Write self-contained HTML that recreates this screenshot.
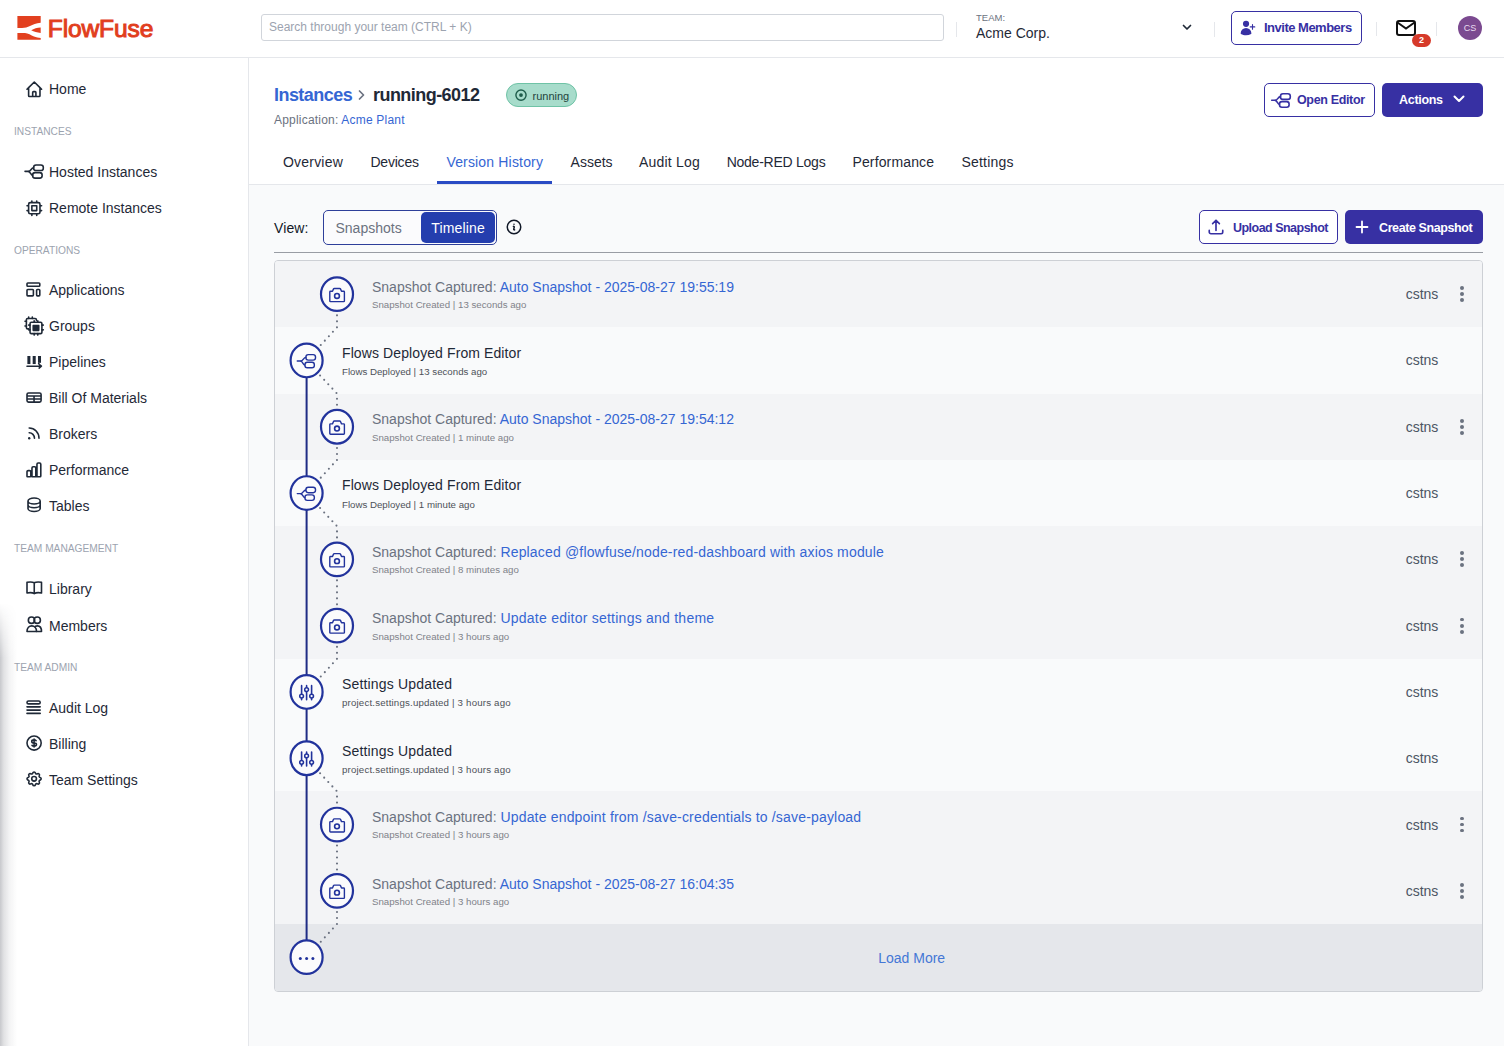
<!DOCTYPE html>
<html><head><meta charset="utf-8">
<style>
*{box-sizing:border-box;margin:0;padding:0}
html,body{width:1504px;height:1046px;overflow:hidden;background:#f9fafb;font-family:"Liberation Sans",sans-serif;color:#1f2937}
.a{position:absolute}
.t{position:absolute;white-space:nowrap;line-height:20px;height:20px}
svg{position:absolute;overflow:visible}
#hdr{left:0;top:0;width:1504px;height:58px;background:#fff;border-bottom:1px solid #e5e7eb}
#side{left:0;top:58px;width:249px;height:988px;background:#fff;border-right:1px solid #e5e7eb}
.nav{font-size:14px;color:#1f2937;left:49px}
.sec{font-size:10.2px;color:#9ca3af;left:14px;letter-spacing:0}
.si *{vector-effect:non-scaling-stroke}
.si [stroke]{stroke-width:1.6px}
.ic{stroke:#1f2937;fill:none;stroke-width:2;stroke-linecap:round;stroke-linejoin:round}
</style></head><body>
<!-- HEADER -->
<div id="hdr" class="a"></div>
<!-- logo -->
<svg style="left:0;top:0" width="60" height="50" viewBox="0 0 60 50">
 <path d="M17.4 16H40.7V22.8C36 23.2 33 24.5 30 26C27.5 27.3 25 27.9 22 27.9H17.4Z" fill="#e2401f"/>
 <path d="M31.2 30.3C34 28.6 37 27.7 40.7 27.5V32.9C37 32.7 34 32 31.2 30.3Z" fill="#e2401f"/>
 <path d="M17.4 32.9H25C28 33 31 35 34 36.5C36 37.4 38.5 37.9 40.7 38V39.8H17.4Z" fill="#e2401f"/>
</svg>
<div class="t" style="left:47.8px;top:13.6px;font-size:24.6px;line-height:30px;height:30px;color:#e13e1d;-webkit-text-stroke:1px #e13e1d;letter-spacing:-0.15px">FlowFuse</div>
<!-- search -->
<div class="a" style="left:261px;top:14px;width:683px;height:27px;border:1px solid #d1d5db;border-radius:3px;background:#fff"></div>
<div class="t" style="left:269px;top:17px;font-size:12px;color:#9ca3af">Search through your team (CTRL + K)</div>
<div class="a" style="left:956px;top:22px;width:1px;height:15px;background:#e5e7eb"></div>
<div class="t" style="left:976px;top:8px;font-size:9.5px;color:#6b7280">TEAM:</div>
<div class="t" style="left:976px;top:23px;font-size:14px;color:#1f2937">Acme Corp.</div>
<svg style="left:1181px;top:21px" width="12" height="12" viewBox="0 0 24 24"><path d="M5 9l7 7 7-7" fill="none" stroke="#1f2937" stroke-width="3.4" stroke-linecap="round" stroke-linejoin="round"/></svg>
<div class="a" style="left:1214px;top:22px;width:1px;height:15px;background:#e5e7eb"></div>
<!-- invite -->
<div class="a" style="left:1231px;top:11px;width:131px;height:34px;border:1px solid #3730a3;border-radius:5px;background:#fff"></div>
<svg style="left:1239px;top:19px" width="18" height="18" viewBox="0 0 24 24"><path fill="#3730a3" d="M5.25 6.375a4.125 4.125 0 1 1 8.25 0 4.125 4.125 0 0 1-8.25 0ZM2.25 19.125a7.125 7.125 0 0 1 14.25 0v.003l-.001.119a.75.75 0 0 1-.363.63 13.067 13.067 0 0 1-6.761 1.873c-2.472 0-4.786-.684-6.76-1.873a.75.75 0 0 1-.364-.63l-.001-.122ZM18.75 7.5a.75.75 0 0 0-1.5 0v2.25H15a.75.75 0 0 0 0 1.5h2.25v2.25a.75.75 0 0 0 1.5 0v-2.25H21a.75.75 0 0 0 0-1.5h-2.25V7.5Z"/></svg>
<div class="t" style="left:1264px;top:18.3px;font-size:13px;font-weight:bold;color:#3730a3;letter-spacing:-0.5px">Invite Members</div>
<div class="a" style="left:1376px;top:22px;width:1px;height:14px;background:#e5e7eb"></div>
<svg style="left:1396px;top:20px" width="20" height="16" viewBox="0 0 20 16"><rect x="1" y="1" width="18" height="14" rx="2" fill="none" stroke="#111" stroke-width="2"/><path d="M1.5 2.5L10 8.5L18.5 2.5" fill="none" stroke="#111" stroke-width="2"/></svg>
<div class="a" style="left:1412px;top:34px;width:19px;height:13px;border-radius:7px;background:#d63a2a"></div>
<div class="t" style="left:1412px;top:34px;width:19px;height:13px;line-height:13px;text-align:center;font-size:9px;color:#fff;font-weight:bold">2</div>
<div class="a" style="left:1436px;top:22px;width:1px;height:14px;background:#e5e7eb"></div>
<div class="a" style="left:1458px;top:16px;width:24px;height:24px;border-radius:12px;background:#7b4a90"></div>
<div class="t" style="left:1458px;top:18px;width:24px;line-height:20px;text-align:center;font-size:9px;color:#e9ddf0">CS</div>

<!-- SIDEBAR -->
<div id="side" class="a"></div>
<div class="a" style="left:0;top:603px;width:17px;height:443px;background:linear-gradient(to right,rgba(20,25,40,0.24),rgba(20,25,40,0.13) 22%,rgba(20,25,40,0.05) 55%,rgba(20,25,40,0) 100%);-webkit-mask-image:linear-gradient(to bottom,transparent,#000 55px)"></div>
<div class="t nav" style="top:78.8px">Home</div>
<svg class="si" style="left:26.80px;top:81.60px" width="14.60" height="14.50" viewBox="3 3 18 18" preserveAspectRatio="none"><path stroke="#1f2937" fill="none" stroke-width="2" stroke-linecap="round" stroke-linejoin="round" d="M3 12l2-2m0 0l7-7 7 7M5 10v10a1 1 0 001 1h3m10-11l2 2m-2-2v10a1 1 0 01-1 1h-3m-6 0a1 1 0 001-1v-4a1 1 0 011-1h2a1 1 0 011 1v4a1 1 0 001 1m-6 0h6"/></svg>
<div class="t sec" style="top:122.2px">INSTANCES</div>
<div class="t nav" style="top:162.2px">Hosted Instances</div>
<svg class="si" style="left:24.80px;top:164.70px" width="18.30" height="13.10" viewBox="0.699999988079071 0.800000011920929 18.599998474121094 13.40000057220459" preserveAspectRatio="none"><g stroke="#1f2937" fill="none" stroke-width="2" stroke-linecap="round" stroke-linejoin="round"><path d="M0.7 7.3H4.5C6.5 7.3 7 3.6 9.5 3.6"/><path d="M4.3 7.4C6.3 7.8 6.5 11.4 8.5 11.4"/><rect x="9.5" y="0.8" width="9.8" height="5.6" rx="2.4"/><rect x="8.5" y="8.6" width="9.6" height="5.6" rx="2.4"/></g></svg>
<div class="t nav" style="top:198.2px">Remote Instances</div>
<svg class="si" style="left:26.80px;top:200.80px" width="14.60" height="14.40" viewBox="3 3 18 18" preserveAspectRatio="none"><path stroke="#1f2937" fill="none" stroke-width="2" stroke-linecap="round" stroke-linejoin="round" d="M9 3v2m6-2v2M9 19v2m6-2v2M5 9H3m2 6H3m18-6h-2m2 6h-2M7 19h10a2 2 0 002-2V7a2 2 0 00-2-2H7a2 2 0 00-2 2v10a2 2 0 002 2zM9 9h6v6H9V9z"/></svg>
<div class="t sec" style="top:241.4px">OPERATIONS</div>
<div class="t nav" style="top:280.0px">Applications</div>
<svg class="si" style="left:27.40px;top:283.00px" width="12.80" height="12.90" viewBox="4 4 16 16" preserveAspectRatio="none"><path stroke="#1f2937" fill="none" stroke-width="2" stroke-linecap="round" stroke-linejoin="round" d="M4 5a1 1 0 011-1h14a1 1 0 011 1v2a1 1 0 01-1 1H5a1 1 0 01-1-1V5zM4 13a1 1 0 011-1h6a1 1 0 011 1v6a1 1 0 01-1 1H5a1 1 0 01-1-1v-6zM16 13a1 1 0 011-1h2a1 1 0 011 1v6a1 1 0 01-1 1h-2a1 1 0 01-1-1v-6z"/></svg>
<div class="t nav" style="top:316.0px">Groups</div>
<svg class="si" style="left:24.80px;top:316.70px" width="18.30" height="18.10" viewBox="2 2.5 20 19" preserveAspectRatio="none"><g stroke="#1f2937" fill="none" stroke-width="2" stroke-linecap="round" stroke-linejoin="round" stroke-width="1.8"><path d="M6 2.5v1.5M10 2.5v1.5M2 7h1.5M2 12h1.5"/><path d="M14.5 6V5.5a1.5 1.5 0 00-1.5-1.5H5a1.5 1.5 0 00-1.5 1.5v8a1.5 1.5 0 001.5 1.5h1"/><path d="M12 6.5v1.5M16 6.5v1.5M12 20v1.5M16 20v1.5M22 11h-1.5M22 16h-1.5M6 11h1.5M6 16h1.5"/><rect x="7.5" y="8" width="13" height="12" rx="1.5"/><rect x="11" y="11.5" width="6" height="5" fill="#1f2937"/></g></svg>
<div class="t nav" style="top:352.0px">Pipelines</div>
<svg class="si" style="left:26.80px;top:355.60px" width="14.40" height="12.10" viewBox="2.5 3 19 19.5" preserveAspectRatio="none"><g><rect x="3" y="3" width="4" height="13" fill="#1f2937"/><rect x="10" y="3" width="4" height="13" fill="#1f2937"/><rect x="17" y="3" width="4" height="11" fill="#1f2937"/><path d="M18 14v2" stroke="#1f2937" stroke-width="4"/><path stroke="#1f2937" fill="none" stroke-width="2" stroke-linecap="round" stroke-linejoin="round" d="M2.5 19.5H21.5M18.5 16.5l3 3-3 3"/></g></svg>
<div class="t nav" style="top:388.0px">Bill Of Materials</div>
<svg class="si" style="left:26.80px;top:393.10px" width="14.10" height="9.10" viewBox="3 6 18 12" preserveAspectRatio="none"><path stroke="#1f2937" fill="none" stroke-width="2" stroke-linecap="round" stroke-linejoin="round" d="M3 10h18M3 14h18m-9-4v8m-7 0h14a2 2 0 002-2V8a2 2 0 00-2-2H5a2 2 0 00-2 2v8a2 2 0 002 2z"/></svg>
<div class="t nav" style="top:424.0px">Brokers</div>
<svg class="si" style="left:28.40px;top:427.80px" width="11.00" height="11.60" viewBox="4.400000095367432 5 14.600000381469727 14.600000381469727" preserveAspectRatio="none"><path stroke="#1f2937" fill="none" stroke-width="2" stroke-linecap="round" stroke-linejoin="round" d="M6 5c7.18 0 13 5.82 13 13M6 11a7 7 0 017 7"/><circle cx="6" cy="18" r="1.6" fill="#1f2937"/></svg>
<div class="t nav" style="top:460.0px">Performance</div>
<svg class="si" style="left:27.10px;top:462.50px" width="13.80" height="13.70" viewBox="3 3 18 18" preserveAspectRatio="none"><path stroke="#1f2937" fill="none" stroke-width="2" stroke-linecap="round" stroke-linejoin="round" d="M3 14.5a1.5 1.5 0 011.5-1.5h2a1.5 1.5 0 011.5 1.5V20a1 1 0 01-1 1H3.5a.5.5 0 01-.5-.5V14.5ZM9.5 9.5A1.5 1.5 0 0111 8h2a1.5 1.5 0 011.5 1.5V21h-5V9.5ZM16 4.5A1.5 1.5 0 0117.5 3h2A1.5 1.5 0 0121 4.5V20a1 1 0 01-1 1h-4V4.5Z"/></svg>
<div class="t nav" style="top:496.0px">Tables</div>
<svg class="si" style="left:27.80px;top:498.40px" width="12.20" height="13.50" viewBox="4 3 16 18" preserveAspectRatio="none"><path stroke="#1f2937" fill="none" stroke-width="2" stroke-linecap="round" stroke-linejoin="round" d="M4 7v10c0 2.21 3.582 4 8 4s8-1.79 8-4V7M4 7c0 2.21 3.582 4 8 4s8-1.79 8-4M4 7c0-2.21 3.582-4 8-4s8 1.79 8 4m0 5c0 2.21-3.582 4-8 4s-8-1.79-8-4"/></svg>
<div class="t sec" style="top:539.3px">TEAM MANAGEMENT</div>
<div class="t nav" style="top:579.4px">Library</div>
<svg class="si" style="left:26.70px;top:582.10px" width="14.50" height="11.70" viewBox="2.5 3.897365093231201 19 17.10263442993164" preserveAspectRatio="none"><path stroke="#1f2937" fill="none" stroke-width="2" stroke-linecap="round" stroke-linejoin="round" d="M12 5C10 3.8 6 3.6 2.5 4.3V20c3.5-.8 7.5-.5 9.5 1 2-1.5 6-1.8 9.5-1V4.3C18 3.6 14 3.8 12 5Zm0 0v16"/></svg>
<div class="t nav" style="top:615.5px">Members</div>
<svg class="si" style="left:26.70px;top:616.50px" width="14.50" height="14.50" viewBox="1.7000000476837158 1.3999998569488525 14.59999942779541 14.600000381469727" preserveAspectRatio="none"><g stroke="#1f2937" fill="none" stroke-width="2" stroke-linecap="round" stroke-linejoin="round"><circle cx="6.25" cy="4.6" r="3.2"/><circle cx="12" cy="4.6" r="3.2"/><path d="M1.7 16C1.7 12.5 4 10.3 6.5 10.3C9 10.3 11.3 12.5 11.3 16Z"/><path d="M10.2 10.8C10.8 10.5 11.5 10.3 12.2 10.3C14.5 10.3 16.3 12.5 16.3 16H11.3"/></g></svg>
<div class="t sec" style="top:657.8px">TEAM ADMIN</div>
<div class="t nav" style="top:698.0px">Audit Log</div>
<svg class="si" style="left:27.30px;top:700.80px" width="13.20" height="12.40" viewBox="3 3 18 17" preserveAspectRatio="none"><g stroke="#1f2937" fill="none" stroke-width="2" stroke-linecap="round" stroke-linejoin="round" stroke-width="1.9"><rect x="3" y="3" width="18" height="4" rx="2"/><path d="M3 11h18M3 15.5h18M3 20h18"/></g></svg>
<div class="t nav" style="top:734.0px">Billing</div>
<svg class="si" style="left:26.80px;top:735.90px" width="14.20" height="14.10" viewBox="3 3.0031075477600098 18.000001907348633 18.000001907348633" preserveAspectRatio="none"><path stroke="#1f2937" fill="none" stroke-width="2" stroke-linecap="round" stroke-linejoin="round" d="M12 8c-1.657 0-3 .895-3 2s1.343 2 3 2 3 .895 3 2-1.343 2-3 2m0-8c1.11 0 2.08.402 2.599 1M12 8V7m0 1v8m0 0v1m0-1c-1.11 0-2.08-.402-2.599-1M21 12a9 9 0 11-18 0 9 9 0 0118 0z"/></svg>
<div class="t nav" style="top:770.0px">Team Settings</div>
<svg class="si" style="left:26.80px;top:771.80px" width="14.20" height="13.70" viewBox="3.0000009536743164 3 18 18" preserveAspectRatio="none"><path stroke="#1f2937" fill="none" stroke-width="2" stroke-linecap="round" stroke-linejoin="round" d="M10.325 4.317c.426-1.756 2.924-1.756 3.35 0a1.724 1.724 0 002.573 1.066c1.543-.94 3.31.826 2.37 2.37a1.724 1.724 0 001.065 2.572c1.756.426 1.756 2.924 0 3.35a1.724 1.724 0 00-1.066 2.573c.94 1.543-.826 3.31-2.37 2.37a1.724 1.724 0 00-2.572 1.065c-.426 1.756-2.924 1.756-3.35 0a1.724 1.724 0 00-2.573-1.066c-1.543.94-3.31-.826-2.37-2.37a1.724 1.724 0 00-1.065-2.572c-1.756-.426-1.756-2.924 0-3.35a1.724 1.724 0 001.066-2.573c-.94-1.543.826-3.31 2.37-2.37.996.608 2.296.07 2.572-1.065z"/><path stroke="#1f2937" fill="none" stroke-width="2" stroke-linecap="round" stroke-linejoin="round" d="M15 12a3 3 0 11-6 0 3 3 0 016 0z"/></svg>

<!-- MAIN -->
<div class="a" style="left:249px;top:58px;width:1255px;height:127px;background:#fff;border-bottom:1px solid #e5e7eb"></div>
<div class="t" style="left:274px;top:83.20px;height:24px;line-height:24px;font-size:18px;color:#3566d3;font-weight:bold;letter-spacing:-0.55px">Instances</div>
<svg style="left:357px;top:89px" width="9" height="12" viewBox="0 0 9 12"><path d="M2.5 2L6.5 6L2.5 10" fill="none" stroke="#6b7280" stroke-width="1.7" stroke-linecap="round" stroke-linejoin="round"/></svg>
<div class="t" style="left:373px;top:83.20px;height:24px;line-height:24px;font-size:18px;color:#1f2937;font-weight:bold;letter-spacing:-0.55px">running-6012</div>
<div class="a" style="left:506px;top:83px;width:71px;height:24px;border-radius:12px;background:#a7dccb;border:1px solid #6fc3a6"></div>
<svg style="left:514px;top:88px" width="14" height="14" viewBox="0 0 14 14"><circle cx="7" cy="7.1" r="5.1" fill="none" stroke="#1d5c4a" stroke-width="1.4"/><circle cx="7" cy="7.1" r="1.9" fill="#1d5c4a"/></svg>
<div class="t" style="left:532.5px;top:85.80px;height:20px;line-height:20px;font-size:11px;color:#24443c;letter-spacing:0px">running</div>
<div class="t" style="left:274px;top:109.50px;height:20px;line-height:20px;font-size:12px;color:#6b7280;letter-spacing:0.2px">Application: <span style="color:#3566d3">Acme Plant</span></div>
<div class="a" style="left:1264px;top:83px;width:111px;height:34px;border:1px solid #3730a3;border-radius:5px;background:#fff"></div>
<svg style="left:1271px;top:93px" width="20" height="15" viewBox="0 0 20 15"><g stroke="#3730a3" fill="none" stroke-width="1.6" stroke-linecap="round" stroke-linejoin="round"><path d="M0.7 7.3H4.5C6.5 7.3 7 3.6 9.5 3.6"/><path d="M4.3 7.4C6.3 7.8 6.5 11.4 8.5 11.4"/><rect x="9.5" y="0.8" width="9.8" height="5.6" rx="2.4"/><rect x="8.5" y="8.6" width="9.6" height="5.6" rx="2.4"/></g></svg>
<div class="t" style="left:1297px;top:89.50px;height:20px;line-height:20px;font-size:12.5px;color:#3730a3;font-weight:bold;letter-spacing:-0.35px">Open Editor</div>
<div class="a" style="left:1382px;top:83px;width:101px;height:34px;border-radius:5px;background:#3730a3"></div>
<div class="t" style="left:1399px;top:89.50px;height:20px;line-height:20px;font-size:12.5px;color:#fff;font-weight:bold;letter-spacing:-0.3px">Actions</div>
<svg style="left:1453px;top:94px" width="12" height="10" viewBox="0 0 12 10"><path d="M1.5 2.5L6 7L10.5 2.5" fill="none" stroke="#fff" stroke-width="2" stroke-linecap="round" stroke-linejoin="round"/></svg>
<div class="t" style="left:283px;top:152.00px;height:20px;line-height:20px;font-size:14px;color:#1f2937;width:66px;letter-spacing:0.2px">Overview</div>
<div class="t" style="left:370.4px;top:152.00px;height:20px;line-height:20px;font-size:14px;color:#1f2937;width:54.4px;letter-spacing:-0.2px">Devices</div>
<div class="t" style="left:446.4px;top:152.00px;height:20px;line-height:20px;font-size:14px;color:#3566d3;width:102.6px;letter-spacing:0.17px">Version History</div>
<div class="t" style="left:570.6px;top:152.00px;height:20px;line-height:20px;font-size:14px;color:#1f2937;width:47.4px;letter-spacing:0px">Assets</div>
<div class="t" style="left:639px;top:152.00px;height:20px;line-height:20px;font-size:14px;color:#1f2937;width:67px;letter-spacing:0.2px">Audit Log</div>
<div class="t" style="left:726.7px;top:152.00px;height:20px;line-height:20px;font-size:14px;color:#1f2937;width:105px;letter-spacing:-0.25px">Node-RED Logs</div>
<div class="t" style="left:852.4px;top:152.00px;height:20px;line-height:20px;font-size:14px;color:#1f2937;width:87.8px;letter-spacing:0.15px">Performance</div>
<div class="t" style="left:961.5px;top:152.00px;height:20px;line-height:20px;font-size:14px;color:#1f2937;width:58.9px;letter-spacing:0.2px">Settings</div>
<div class="a" style="left:437px;top:181px;width:115px;height:3px;background:#2a4bc4"></div>
<div class="t" style="left:274px;top:218.00px;height:20px;line-height:20px;font-size:14px;color:#111827;letter-spacing:0.1px">View:</div>
<div class="a" style="left:323px;top:210px;width:174px;height:35px;border:1px solid #2e3f9a;border-radius:5px;background:#fbfbfd"></div>
<div class="a" style="left:421px;top:212px;width:74px;height:31px;border-radius:5px;background:#243eae"></div>
<div class="t" style="left:335.5px;top:218.00px;height:20px;line-height:20px;font-size:14px;color:#6b7280;">Snapshots</div>
<div class="t" style="left:431.3px;top:218.00px;height:20px;line-height:20px;font-size:14px;color:#fff;letter-spacing:0.15px">Timeline</div>
<svg style="left:505px;top:218px" width="18" height="18" viewBox="0 0 24 24"><path d="m11.25 11.25.041-.02a.75.75 0 0 1 1.063.852l-.708 2.836a.75.75 0 0 0 1.063.853l.041-.021M21 12a9 9 0 1 1-18 0 9 9 0 0 1 18 0Zm-9-3.75h.008v.008H12V8.25Z" fill="none" stroke="#111827" stroke-width="2" stroke-linecap="round" stroke-linejoin="round"/></svg>
<div class="a" style="left:1199px;top:210px;width:139px;height:34px;border:1px solid #3730a3;border-radius:5px;background:#fff"></div>
<svg style="left:1207px;top:218px" width="18" height="18" viewBox="0 0 24 24"><path d="M3 16.5v2.25A2.25 2.25 0 0 0 5.25 21h13.5A2.25 2.25 0 0 0 21 18.75V16.5m-13.5-9L12 3m0 0 4.5 4.5M12 3v13.5" fill="none" stroke="#3730a3" stroke-width="2.2" stroke-linecap="round" stroke-linejoin="round"/></svg>
<div class="t" style="left:1233px;top:218.20px;height:20px;line-height:20px;font-size:12.5px;color:#3730a3;font-weight:bold;letter-spacing:-0.52px">Upload Snapshot</div>
<div class="a" style="left:1345px;top:210px;width:138px;height:34px;border-radius:5px;background:#3730a3"></div>
<svg style="left:1355px;top:220px" width="14" height="14" viewBox="0 0 14 14"><path d="M7 1.5V12.5M1.5 7H12.5" fill="none" stroke="#fff" stroke-width="1.8" stroke-linecap="round"/></svg>
<div class="t" style="left:1379px;top:218.20px;height:20px;line-height:20px;font-size:12.5px;color:#fff;font-weight:bold;letter-spacing:-0.4px">Create Snapshot</div>
<div class="a" style="left:274px;top:252px;width:1209px;height:1px;background:#999da4"></div>
<div class="a" style="left:274px;top:260px;width:1209px;height:732px;border:1px solid #cdd0d5;border-radius:4px;background:#f9fafb;overflow:hidden" id="list">
<div class="a" style="left:0;top:0.00px;width:1207px;height:66.80px;background:#f3f4f6"></div>
<div class="a" style="left:0;top:66.30px;width:1207px;height:66.80px;background:#f9fafb"></div>
<div class="a" style="left:0;top:132.60px;width:1207px;height:66.80px;background:#f3f4f6"></div>
<div class="a" style="left:0;top:198.90px;width:1207px;height:66.80px;background:#f9fafb"></div>
<div class="a" style="left:0;top:265.20px;width:1207px;height:66.80px;background:#f3f4f6"></div>
<div class="a" style="left:0;top:331.50px;width:1207px;height:66.80px;background:#f3f4f6"></div>
<div class="a" style="left:0;top:397.80px;width:1207px;height:66.80px;background:#f9fafb"></div>
<div class="a" style="left:0;top:464.10px;width:1207px;height:66.80px;background:#f9fafb"></div>
<div class="a" style="left:0;top:530.40px;width:1207px;height:66.80px;background:#f3f4f6"></div>
<div class="a" style="left:0;top:596.70px;width:1207px;height:66.80px;background:#f3f4f6"></div>
<div class="a" style="left:0;top:663.00px;width:1207px;height:80px;background:#e5e7eb"></div>
</div>
<div class="t" style="left:372px;top:276.80px;height:20px;line-height:20px;font-size:14px;color:#6b7280;">Snapshot Captured: <span style="color:#3566d3;letter-spacing:0px">Auto Snapshot - 2025-08-27 19:55:19</span></div>
<div class="t" style="left:372px;top:298.05px;height:14px;line-height:14px;font-size:9.7px;color:#7f8289;">Snapshot Created | 13 seconds ago</div>
<div class="a" style="left:1460.1px;top:286.15px;width:3.8px;height:3.8px;border-radius:2px;background:#6b7280"></div>
<div class="a" style="left:1460.1px;top:292.25px;width:3.8px;height:3.8px;border-radius:2px;background:#6b7280"></div>
<div class="a" style="left:1460.1px;top:298.25px;width:3.8px;height:3.8px;border-radius:2px;background:#6b7280"></div>
<div class="t" style="left:1405.7px;top:284.15px;height:20px;line-height:20px;font-size:14px;color:#4b5563;">cstns</div>
<div class="t" style="left:342px;top:342.75px;height:20px;line-height:20px;font-size:14px;color:#1f2937;letter-spacing:0.1px">Flows Deployed From Editor</div>
<div class="t" style="left:342px;top:364.95px;height:14px;line-height:14px;font-size:9.7px;color:#4d5158;letter-spacing:0">Flows Deployed | 13 seconds ago</div>
<div class="t" style="left:1405.7px;top:350.45px;height:20px;line-height:20px;font-size:14px;color:#4b5563;">cstns</div>
<div class="t" style="left:372px;top:409.40px;height:20px;line-height:20px;font-size:14px;color:#6b7280;">Snapshot Captured: <span style="color:#3566d3;letter-spacing:0px">Auto Snapshot - 2025-08-27 19:54:12</span></div>
<div class="t" style="left:372px;top:430.65px;height:14px;line-height:14px;font-size:9.7px;color:#7f8289;">Snapshot Created | 1 minute ago</div>
<div class="a" style="left:1460.1px;top:418.75px;width:3.8px;height:3.8px;border-radius:2px;background:#6b7280"></div>
<div class="a" style="left:1460.1px;top:424.85px;width:3.8px;height:3.8px;border-radius:2px;background:#6b7280"></div>
<div class="a" style="left:1460.1px;top:430.85px;width:3.8px;height:3.8px;border-radius:2px;background:#6b7280"></div>
<div class="t" style="left:1405.7px;top:416.75px;height:20px;line-height:20px;font-size:14px;color:#4b5563;">cstns</div>
<div class="t" style="left:342px;top:475.35px;height:20px;line-height:20px;font-size:14px;color:#1f2937;letter-spacing:0.1px">Flows Deployed From Editor</div>
<div class="t" style="left:342px;top:497.55px;height:14px;line-height:14px;font-size:9.7px;color:#4d5158;letter-spacing:0">Flows Deployed | 1 minute ago</div>
<div class="t" style="left:1405.7px;top:483.05px;height:20px;line-height:20px;font-size:14px;color:#4b5563;">cstns</div>
<div class="t" style="left:372px;top:542.00px;height:20px;line-height:20px;font-size:14px;color:#6b7280;">Snapshot Captured: <span style="color:#3566d3;letter-spacing:0.165px">Replaced @flowfuse/node-red-dashboard with axios module</span></div>
<div class="t" style="left:372px;top:563.25px;height:14px;line-height:14px;font-size:9.7px;color:#7f8289;">Snapshot Created | 8 minutes ago</div>
<div class="a" style="left:1460.1px;top:551.35px;width:3.8px;height:3.8px;border-radius:2px;background:#6b7280"></div>
<div class="a" style="left:1460.1px;top:557.45px;width:3.8px;height:3.8px;border-radius:2px;background:#6b7280"></div>
<div class="a" style="left:1460.1px;top:563.45px;width:3.8px;height:3.8px;border-radius:2px;background:#6b7280"></div>
<div class="t" style="left:1405.7px;top:549.35px;height:20px;line-height:20px;font-size:14px;color:#4b5563;">cstns</div>
<div class="t" style="left:372px;top:608.30px;height:20px;line-height:20px;font-size:14px;color:#6b7280;">Snapshot Captured: <span style="color:#3566d3;letter-spacing:0.24px">Update editor settings and theme</span></div>
<div class="t" style="left:372px;top:629.55px;height:14px;line-height:14px;font-size:9.7px;color:#7f8289;">Snapshot Created | 3 hours ago</div>
<div class="a" style="left:1460.1px;top:617.65px;width:3.8px;height:3.8px;border-radius:2px;background:#6b7280"></div>
<div class="a" style="left:1460.1px;top:623.75px;width:3.8px;height:3.8px;border-radius:2px;background:#6b7280"></div>
<div class="a" style="left:1460.1px;top:629.75px;width:3.8px;height:3.8px;border-radius:2px;background:#6b7280"></div>
<div class="t" style="left:1405.7px;top:615.65px;height:20px;line-height:20px;font-size:14px;color:#4b5563;">cstns</div>
<div class="t" style="left:342px;top:674.25px;height:20px;line-height:20px;font-size:14px;color:#1f2937;letter-spacing:0.17px">Settings Updated</div>
<div class="t" style="left:342px;top:696.45px;height:14px;line-height:14px;font-size:9.7px;color:#4d5158;letter-spacing:0.18px">project.settings.updated | 3 hours ago</div>
<div class="t" style="left:1405.7px;top:681.95px;height:20px;line-height:20px;font-size:14px;color:#4b5563;">cstns</div>
<div class="t" style="left:342px;top:740.55px;height:20px;line-height:20px;font-size:14px;color:#1f2937;letter-spacing:0.17px">Settings Updated</div>
<div class="t" style="left:342px;top:762.75px;height:14px;line-height:14px;font-size:9.7px;color:#4d5158;letter-spacing:0.18px">project.settings.updated | 3 hours ago</div>
<div class="t" style="left:1405.7px;top:748.25px;height:20px;line-height:20px;font-size:14px;color:#4b5563;">cstns</div>
<div class="t" style="left:372px;top:807.20px;height:20px;line-height:20px;font-size:14px;color:#6b7280;">Snapshot Captured: <span style="color:#3566d3;letter-spacing:0.18px">Update endpoint from /save-credentials to /save-payload</span></div>
<div class="t" style="left:372px;top:828.45px;height:14px;line-height:14px;font-size:9.7px;color:#7f8289;">Snapshot Created | 3 hours ago</div>
<div class="a" style="left:1460.1px;top:816.55px;width:3.8px;height:3.8px;border-radius:2px;background:#6b7280"></div>
<div class="a" style="left:1460.1px;top:822.65px;width:3.8px;height:3.8px;border-radius:2px;background:#6b7280"></div>
<div class="a" style="left:1460.1px;top:828.65px;width:3.8px;height:3.8px;border-radius:2px;background:#6b7280"></div>
<div class="t" style="left:1405.7px;top:814.55px;height:20px;line-height:20px;font-size:14px;color:#4b5563;">cstns</div>
<div class="t" style="left:372px;top:873.50px;height:20px;line-height:20px;font-size:14px;color:#6b7280;">Snapshot Captured: <span style="color:#3566d3;letter-spacing:0px">Auto Snapshot - 2025-08-27 16:04:35</span></div>
<div class="t" style="left:372px;top:894.75px;height:14px;line-height:14px;font-size:9.7px;color:#7f8289;">Snapshot Created | 3 hours ago</div>
<div class="a" style="left:1460.1px;top:882.85px;width:3.8px;height:3.8px;border-radius:2px;background:#6b7280"></div>
<div class="a" style="left:1460.1px;top:888.95px;width:3.8px;height:3.8px;border-radius:2px;background:#6b7280"></div>
<div class="a" style="left:1460.1px;top:894.95px;width:3.8px;height:3.8px;border-radius:2px;background:#6b7280"></div>
<div class="t" style="left:1405.7px;top:880.85px;height:20px;line-height:20px;font-size:14px;color:#4b5563;">cstns</div>
<div class="t" style="left:878.2px;top:948.35px;height:20px;line-height:20px;font-size:14px;color:#4477d6;">Load More</div>
<svg style="left:0;top:0" width="1504" height="1046" viewBox="0 0 1504 1046">
<path d="M306.6 360.45V957.15" stroke="#1f2c85" stroke-width="2"/>
<path d="M337 315.35V327.30L318.6 347.45" fill="none" stroke="#6b7280" stroke-width="2.1" stroke-dasharray="0 6" stroke-linecap="round"/>
<path d="M320.1 375.45L337 393.60V409.75" fill="none" stroke="#6b7280" stroke-width="2.1" stroke-dasharray="0 6" stroke-linecap="round"/>
<path d="M337 447.95V459.90L318.6 480.05" fill="none" stroke="#6b7280" stroke-width="2.1" stroke-dasharray="0 6" stroke-linecap="round"/>
<path d="M320.1 508.05L337 526.20V542.35" fill="none" stroke="#6b7280" stroke-width="2.1" stroke-dasharray="0 6" stroke-linecap="round"/>
<path d="M337 580.35V608.65" fill="none" stroke="#6b7280" stroke-width="2.1" stroke-dasharray="0 6" stroke-linecap="round"/>
<path d="M337 646.85V658.80L318.6 678.95" fill="none" stroke="#6b7280" stroke-width="2.1" stroke-dasharray="0 6" stroke-linecap="round"/>
<path d="M320.1 773.25L337 791.40V807.55" fill="none" stroke="#6b7280" stroke-width="2.1" stroke-dasharray="0 6" stroke-linecap="round"/>
<path d="M337 845.55V873.85" fill="none" stroke="#6b7280" stroke-width="2.1" stroke-dasharray="0 6" stroke-linecap="round"/>
<path d="M337 912.05V924.00L318.6 944.15" fill="none" stroke="#6b7280" stroke-width="2.1" stroke-dasharray="0 6" stroke-linecap="round"/>
<ellipse cx="337" cy="294.15" rx="16" ry="16.8" fill="#fbfbfc" stroke="#22339c" stroke-width="2.2"/>
<g transform="translate(337 294.15)" fill="none" stroke="#22339c" stroke-width="1.4" stroke-linecap="round" stroke-linejoin="round"><path d="M-7.2 -2.2Q-7.2 -2.9 -6.5 -2.9H-4.5L-3.6 -5Q-3.3 -5.7 -2.6 -5.7H2.6Q3.3 -5.7 3.6 -5L4.5 -2.9H6.7Q7.4 -2.9 7.4 -2.2V6.8Q7.4 7.5 6.7 7.5H-6.5Q-7.2 7.5 -7.2 6.8Z"/><circle cx="0" cy="1.8" r="2.4" stroke-width="1.6"/></g>
<ellipse cx="306.6" cy="360.45" rx="16" ry="16.8" fill="#fbfbfc" stroke="#22339c" stroke-width="2.2"/>
<g transform="translate(306.6 360.45)" fill="none" stroke="#22339c" stroke-width="1.4" stroke-linecap="round" stroke-linejoin="round"><g transform="translate(-10 -6.6) scale(0.98)" stroke-width="1.45"><path d="M0.7 7.3H4.5C6.5 7.3 7 3.6 9.5 3.6"/><path d="M4.3 7.4C6.3 7.8 6.5 11.4 8.5 11.4"/><rect x="9.5" y="0.8" width="9.8" height="5.6" rx="2.4"/><rect x="8.5" y="8.6" width="9.6" height="5.6" rx="2.4"/></g></g>
<ellipse cx="337" cy="426.75" rx="16" ry="16.8" fill="#fbfbfc" stroke="#22339c" stroke-width="2.2"/>
<g transform="translate(337 426.75)" fill="none" stroke="#22339c" stroke-width="1.4" stroke-linecap="round" stroke-linejoin="round"><path d="M-7.2 -2.2Q-7.2 -2.9 -6.5 -2.9H-4.5L-3.6 -5Q-3.3 -5.7 -2.6 -5.7H2.6Q3.3 -5.7 3.6 -5L4.5 -2.9H6.7Q7.4 -2.9 7.4 -2.2V6.8Q7.4 7.5 6.7 7.5H-6.5Q-7.2 7.5 -7.2 6.8Z"/><circle cx="0" cy="1.8" r="2.4" stroke-width="1.6"/></g>
<ellipse cx="306.6" cy="493.05" rx="16" ry="16.8" fill="#fbfbfc" stroke="#22339c" stroke-width="2.2"/>
<g transform="translate(306.6 493.05)" fill="none" stroke="#22339c" stroke-width="1.4" stroke-linecap="round" stroke-linejoin="round"><g transform="translate(-10 -6.6) scale(0.98)" stroke-width="1.45"><path d="M0.7 7.3H4.5C6.5 7.3 7 3.6 9.5 3.6"/><path d="M4.3 7.4C6.3 7.8 6.5 11.4 8.5 11.4"/><rect x="9.5" y="0.8" width="9.8" height="5.6" rx="2.4"/><rect x="8.5" y="8.6" width="9.6" height="5.6" rx="2.4"/></g></g>
<ellipse cx="337" cy="559.35" rx="16" ry="16.8" fill="#fbfbfc" stroke="#22339c" stroke-width="2.2"/>
<g transform="translate(337 559.35)" fill="none" stroke="#22339c" stroke-width="1.4" stroke-linecap="round" stroke-linejoin="round"><path d="M-7.2 -2.2Q-7.2 -2.9 -6.5 -2.9H-4.5L-3.6 -5Q-3.3 -5.7 -2.6 -5.7H2.6Q3.3 -5.7 3.6 -5L4.5 -2.9H6.7Q7.4 -2.9 7.4 -2.2V6.8Q7.4 7.5 6.7 7.5H-6.5Q-7.2 7.5 -7.2 6.8Z"/><circle cx="0" cy="1.8" r="2.4" stroke-width="1.6"/></g>
<ellipse cx="337" cy="625.65" rx="16" ry="16.8" fill="#fbfbfc" stroke="#22339c" stroke-width="2.2"/>
<g transform="translate(337 625.65)" fill="none" stroke="#22339c" stroke-width="1.4" stroke-linecap="round" stroke-linejoin="round"><path d="M-7.2 -2.2Q-7.2 -2.9 -6.5 -2.9H-4.5L-3.6 -5Q-3.3 -5.7 -2.6 -5.7H2.6Q3.3 -5.7 3.6 -5L4.5 -2.9H6.7Q7.4 -2.9 7.4 -2.2V6.8Q7.4 7.5 6.7 7.5H-6.5Q-7.2 7.5 -7.2 6.8Z"/><circle cx="0" cy="1.8" r="2.4" stroke-width="1.6"/></g>
<ellipse cx="306.6" cy="691.95" rx="16" ry="16.8" fill="#fbfbfc" stroke="#22339c" stroke-width="2.2"/>
<g transform="translate(306.6 691.95)" fill="none" stroke="#22339c" stroke-width="1.4" stroke-linecap="round" stroke-linejoin="round"><path d="M-5 -6.3V7.7M0 -6.3V7.7M5 -6.3V7.7" stroke-width="1.6"/><circle cx="-5" cy="4.1" r="1.9" fill="#fbfbfc" stroke-width="1.5"/><circle cx="5" cy="4.1" r="1.9" fill="#fbfbfc" stroke-width="1.5"/><circle cx="0" cy="-2.3" r="1.9" fill="#fbfbfc" stroke-width="1.5"/></g>
<ellipse cx="306.6" cy="758.25" rx="16" ry="16.8" fill="#fbfbfc" stroke="#22339c" stroke-width="2.2"/>
<g transform="translate(306.6 758.25)" fill="none" stroke="#22339c" stroke-width="1.4" stroke-linecap="round" stroke-linejoin="round"><path d="M-5 -6.3V7.7M0 -6.3V7.7M5 -6.3V7.7" stroke-width="1.6"/><circle cx="-5" cy="4.1" r="1.9" fill="#fbfbfc" stroke-width="1.5"/><circle cx="5" cy="4.1" r="1.9" fill="#fbfbfc" stroke-width="1.5"/><circle cx="0" cy="-2.3" r="1.9" fill="#fbfbfc" stroke-width="1.5"/></g>
<ellipse cx="337" cy="824.55" rx="16" ry="16.8" fill="#fbfbfc" stroke="#22339c" stroke-width="2.2"/>
<g transform="translate(337 824.55)" fill="none" stroke="#22339c" stroke-width="1.4" stroke-linecap="round" stroke-linejoin="round"><path d="M-7.2 -2.2Q-7.2 -2.9 -6.5 -2.9H-4.5L-3.6 -5Q-3.3 -5.7 -2.6 -5.7H2.6Q3.3 -5.7 3.6 -5L4.5 -2.9H6.7Q7.4 -2.9 7.4 -2.2V6.8Q7.4 7.5 6.7 7.5H-6.5Q-7.2 7.5 -7.2 6.8Z"/><circle cx="0" cy="1.8" r="2.4" stroke-width="1.6"/></g>
<ellipse cx="337" cy="890.85" rx="16" ry="16.8" fill="#fbfbfc" stroke="#22339c" stroke-width="2.2"/>
<g transform="translate(337 890.85)" fill="none" stroke="#22339c" stroke-width="1.4" stroke-linecap="round" stroke-linejoin="round"><path d="M-7.2 -2.2Q-7.2 -2.9 -6.5 -2.9H-4.5L-3.6 -5Q-3.3 -5.7 -2.6 -5.7H2.6Q3.3 -5.7 3.6 -5L4.5 -2.9H6.7Q7.4 -2.9 7.4 -2.2V6.8Q7.4 7.5 6.7 7.5H-6.5Q-7.2 7.5 -7.2 6.8Z"/><circle cx="0" cy="1.8" r="2.4" stroke-width="1.6"/></g>
<ellipse cx="306.6" cy="957.15" rx="16" ry="16.8" fill="#fbfbfc" stroke="#22339c" stroke-width="2.2"/>
<g transform="translate(306.6 957.15)" fill="none" stroke="#22339c" stroke-width="1.4" stroke-linecap="round" stroke-linejoin="round"><circle cx="-6.3" cy="1.3" r="1.5" fill="#22339c" stroke="none"/><circle cx="0" cy="1.3" r="1.5" fill="#22339c" stroke="none"/><circle cx="6.3" cy="1.3" r="1.5" fill="#22339c" stroke="none"/></g>
</svg>
</body></html>
